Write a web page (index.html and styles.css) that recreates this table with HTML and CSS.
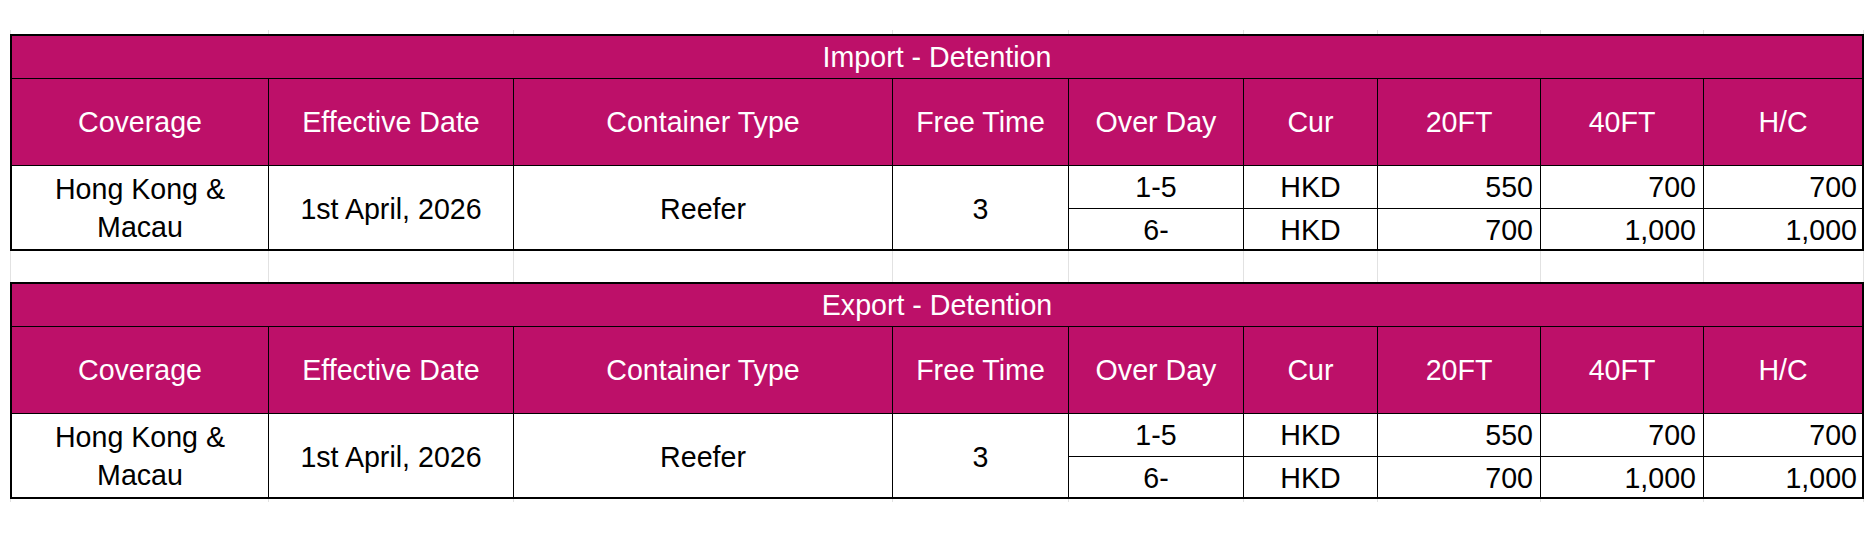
FILE: index.html
```html
<!DOCTYPE html>
<html lang="en">
<head>
<meta charset="utf-8">
<title>Detention</title>
<link rel="stylesheet" href="styles.css">
</head>
<body>
<div class="sheet">
  <div class="spacer top-spacer">
    <div></div><div></div><div></div><div></div><div></div><div></div><div></div><div></div><div></div>
  </div>

  <div class="tbl">
    <div class="title">Import - Detention</div>
    <div class="hd">Coverage</div>
    <div class="hd">Effective Date</div>
    <div class="hd">Container Type</div>
    <div class="hd">Free Time</div>
    <div class="hd">Over Day</div>
    <div class="hd">Cur</div>
    <div class="hd">20FT</div>
    <div class="hd">40FT</div>
    <div class="hd last">H/C</div>

    <div class="td span2 ml">Hong Kong &amp;<br>Macau</div>
    <div class="td span2">1st April, 2026</div>
    <div class="td span2">Reefer</div>
    <div class="td span2">3</div>
    <div class="td r1">1-5</div>
    <div class="td r1">HKD</div>
    <div class="td r1 num">550</div>
    <div class="td r1 num">700</div>
    <div class="td r1 num last">700</div>
    <div class="td r2">6-</div>
    <div class="td r2">HKD</div>
    <div class="td r2 num">700</div>
    <div class="td r2 num">1,000</div>
    <div class="td r2 num last">1,000</div>
  </div>

  <div class="spacer gap-spacer">
    <div></div><div></div><div></div><div></div><div></div><div></div><div></div><div></div><div></div>
  </div>

  <div class="tbl">
    <div class="title">Export - Detention</div>
    <div class="hd">Coverage</div>
    <div class="hd">Effective Date</div>
    <div class="hd">Container Type</div>
    <div class="hd">Free Time</div>
    <div class="hd">Over Day</div>
    <div class="hd">Cur</div>
    <div class="hd">20FT</div>
    <div class="hd">40FT</div>
    <div class="hd last">H/C</div>

    <div class="td span2 ml">Hong Kong &amp;<br>Macau</div>
    <div class="td span2">1st April, 2026</div>
    <div class="td span2">Reefer</div>
    <div class="td span2">3</div>
    <div class="td r1">1-5</div>
    <div class="td r1">HKD</div>
    <div class="td r1 num">550</div>
    <div class="td r1 num">700</div>
    <div class="td r1 num last">700</div>
    <div class="td r2">6-</div>
    <div class="td r2">HKD</div>
    <div class="td r2 num">700</div>
    <div class="td r2 num">1,000</div>
    <div class="td r2 num last">1,000</div>
  </div>

  <div class="spacer bottom-spacer">
    <div></div><div></div><div></div><div></div><div></div><div></div><div></div><div></div><div></div>
  </div>
</div>
</body>
</html>
```

FILE: styles.css
```css
* {
  box-sizing: border-box;
}

html, body {
  margin: 0;
  padding: 0;
  background: #ffffff;
}

body {
  font-family: "Liberation Sans", Arial, sans-serif;
  font-size: 28.6px;
  color: #000000;
}

.sheet {
  display: flex;
  flex-direction: column;
  padding: 30px 0 0 10px;
}

/* faint spreadsheet gridlines outside the bordered tables */
.spacer {
  display: grid;
  grid-template-columns: 259px 245px 379px 176px 175px 134px 163px 163px 160px;
  width: 1854px;
}

.spacer > div {
  border-right: 1px solid #e2e2e2;
}

.spacer > div:first-child {
  border-left: 1px solid #e2e2e2;
}

.top-spacer {
  height: 4px;
}

.gap-spacer {
  height: 31px;
}

.bottom-spacer {
  height: 3px;
}

.tbl {
  display: grid;
  grid-template-columns: 257px 245px 379px 176px 175px 134px 163px 163px 158px;
  grid-template-rows: 43px 87px 43px 40px;
  width: 1854px;
  border: 2px solid #000000;
}

.title {
  grid-column: 1 / -1;
  background: #bd1069;
  color: #ffffff;
  border-bottom: 1px solid #000000;
  display: flex;
  align-items: center;
  justify-content: center;
  padding-top: 1px;
}

.hd {
  background: #bd1069;
  color: #ffffff;
  border-right: 1px solid #000000;
  border-bottom: 1px solid #000000;
  display: flex;
  align-items: center;
  justify-content: center;
}

.hd.last {
  border-right: none;
}

.td {
  background: #ffffff;
  border-right: 1px solid #000000;
  display: flex;
  align-items: center;
  justify-content: center;
  white-space: nowrap;
}

.td.span2 {
  grid-row: span 2;
  padding-top: 3px;
}

.td.ml {
  line-height: 38px;
  text-align: center;
  white-space: normal;
  padding-top: 1px;
}

.td.r1 {
  border-bottom: 1px solid #000000;
}

.td.r2 {
  padding-top: 2px;
}

.td.num {
  justify-content: flex-end;
  padding-right: 7px;
}

.td.last {
  border-right: none;
  padding-right: 5px;
}
```
